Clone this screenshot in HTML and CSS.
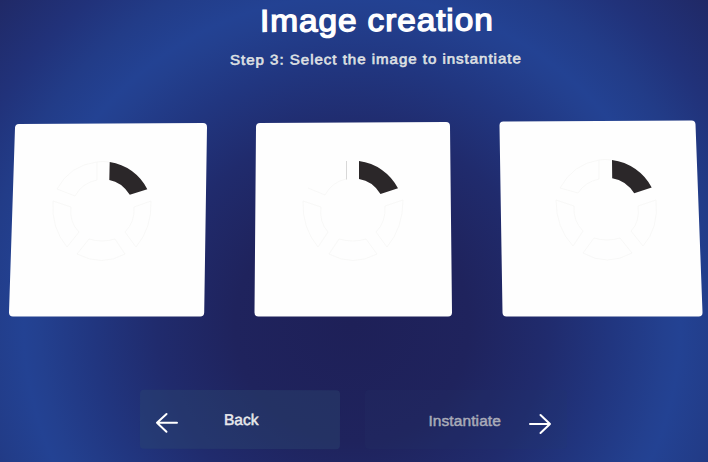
FILE: index.html
```html
<!DOCTYPE html>
<html lang="en">
<head>
<meta charset="utf-8">
<title>Image creation</title>
<link rel="stylesheet" href="styles.css">
</head>
<body>
<main class="screen">
  <header class="heading">
    <h1 class="title">Image creation</h1>
    <p class="subtitle">Step 3: Select the image to instantiate</p>
  </header>
  <section class="cards">
    <svg class="card" viewBox="0 0 236 200">
      <path class="panel" d="M19 8 203 7 200.200 192.500 13 192.500Z"/>
      <path class="segment" d="M109.700 42A50 50 0 0 1 147.300 69.300L129.800 74.800Q121.500 62 109.300 60Z"/>
      <g class="track">
        <path d="M97 42Q70 45 57 69L75 76Q82 63 97 60ZM53 81 71 87Q69 102 79 112L67 127Q51 108 53 81ZM151 81 134 87Q135 102 125 112L136 127Q152 108 151 81ZM89 119Q102 123 115 119L125 134Q102 147 77 134ZM97 42Q103 41 109 42"/>
      </g>
    </svg>
    <svg class="card" viewBox="236 0 236 200">
      <path class="panel" d="M260 7 446 6 448 192.500 258.500 192.500Z"/>
      <path class="segment" d="M359 41A51 50 0 0 1 398 68.300L380.500 74Q372.500 61 359 59Z"/>
      <path class="mark" d="M346.500 41V59.500"/>
      <g class="track">
        <path d="M346 59Q332 62 325 75L308 68M303 81 321 87Q319 102 328 112L318 127Q302 108 303 81ZM403 80 385 86Q386 102 376 112L387 127Q403 108 403 80ZM339 119Q353 123 366 119L377 134Q353 147 329 134Z"/>
      </g>
    </svg>
    <svg class="card" viewBox="472 0 236 200">
      <path class="panel" d="M503.500 5.500 691.500 4.500 698.500 192.500 506.500 192.500Z"/>
      <path class="segment" d="M612 40A52 50 0 0 1 651.700 67.600L634.200 73.300Q626 60.500 612.200 58.300Z"/>
      <g class="track">
        <path d="M599 40Q573 44 560 68L578 73Q585 62 599 59ZM556 80 574 86Q573 101 583 111L573 126Q556 108 556 80ZM656 80 638 86Q640 102 631 111L643 126Q659 108 656 80ZM594 118Q607 122 620 118L632 133Q607 147 583 133ZM599 40Q605 39 611 40"/>
      </g>
    </svg>
  </section>
  <nav class="actions">
    <button class="button back">
      <svg class="arrow" viewBox="0 0 24 24"><path d="M22 12H2M11.500 3.200 2 12l9.500 9"/></svg>
      <span class="label">Back</span>
    </button>
    <button class="button next" disabled>
      <span class="label">Instantiate</span>
      <svg class="arrow" viewBox="0 0 24 24"><path d="M2 12H22M12.500 3 22 12l-9.500 9"/></svg>
    </button>
  </nav>
</main>
</body>
</html>
```
FILE: styles.css
```css
* { box-sizing: border-box; }
body {
  margin: 0;
  font-family: "Liberation Sans", Arial, sans-serif;
}
.screen {
  display: flex;
  flex-direction: column;
  width: 708px;
  height: 462px;
  overflow: hidden;
  background: radial-gradient(circle 325px at 352px 324px, #1e2058 0%, #1f235d 36%, #202b6d 60%, #213680 80%, #23408f 96%, #234293 101%, #223c88 114%, #21327a 128%, #202864 150%);
}
.heading {
  width: 600px;
  height: 120px;
  margin-left: 77px;
  padding-top: 2px;
  text-align: center;
  transform: rotate(-0.3deg) scaleX(1.08);
}
.title {
  margin: 0;
  color: #fff;
  font-size: 31px;
  font-weight: 400;
  line-height: 38px;
  letter-spacing: 0.8px;
  -webkit-text-stroke: 1.3px #fff;
}
.subtitle {
  margin: 9px 0 0;
  padding-right: 2px;
  color: #dfe0e3;
  font-size: 14px;
  line-height: 20px;
  letter-spacing: 0.88px;
  -webkit-text-stroke: 0.6px #dfe0e3;
}
.cards {
  display: grid;
  grid-template-columns: repeat(3, 236px);
  height: 200px;
}
.card {
  width: 236px;
  height: 200px;
}
.panel {
  fill: #fefefe;
  stroke: #fefefe;
  stroke-width: 8;
  stroke-linejoin: round;
}
.segment { fill: #2b2729; }
.track {
  fill: none;
  stroke: #f5f5f4;
  stroke-width: 0.7;
}
.mark { stroke: #d8d8d8; }
.actions {
  display: flex;
  gap: 25px;
  padding: 70px 0 0 140px;
}
.button {
  display: flex;
  align-items: center;
  height: 59px;
  padding: 0;
  border: 0;
  border-radius: 4px;
  font: 15.5px "Liberation Sans", Arial, sans-serif;
}
.back {
  width: 200px;
  padding: 6px 0 0 15px;
  background: rgba(46, 72, 112, 0.4);
  color: #e8e9eb;
  transform: rotate(0.15deg);
}
.next {
  width: 202px;
  justify-content: flex-end;
  gap: 27px;
  padding: 8px 15px 0 0;
  background: rgba(42, 64, 108, 0.13);
  color: #a9abb8;
}
.label {
  margin-top: -5px;
  -webkit-text-stroke: 0.5px currentColor;
}
.next .label { letter-spacing: 0.1px; }
.back .label { margin-left: 45px; }
.arrow {
  width: 24px;
  height: 24px;
  fill: none;
  stroke: #fff;
  stroke-width: 2;
  stroke-linecap: round;
  stroke-linejoin: round;
}
```
